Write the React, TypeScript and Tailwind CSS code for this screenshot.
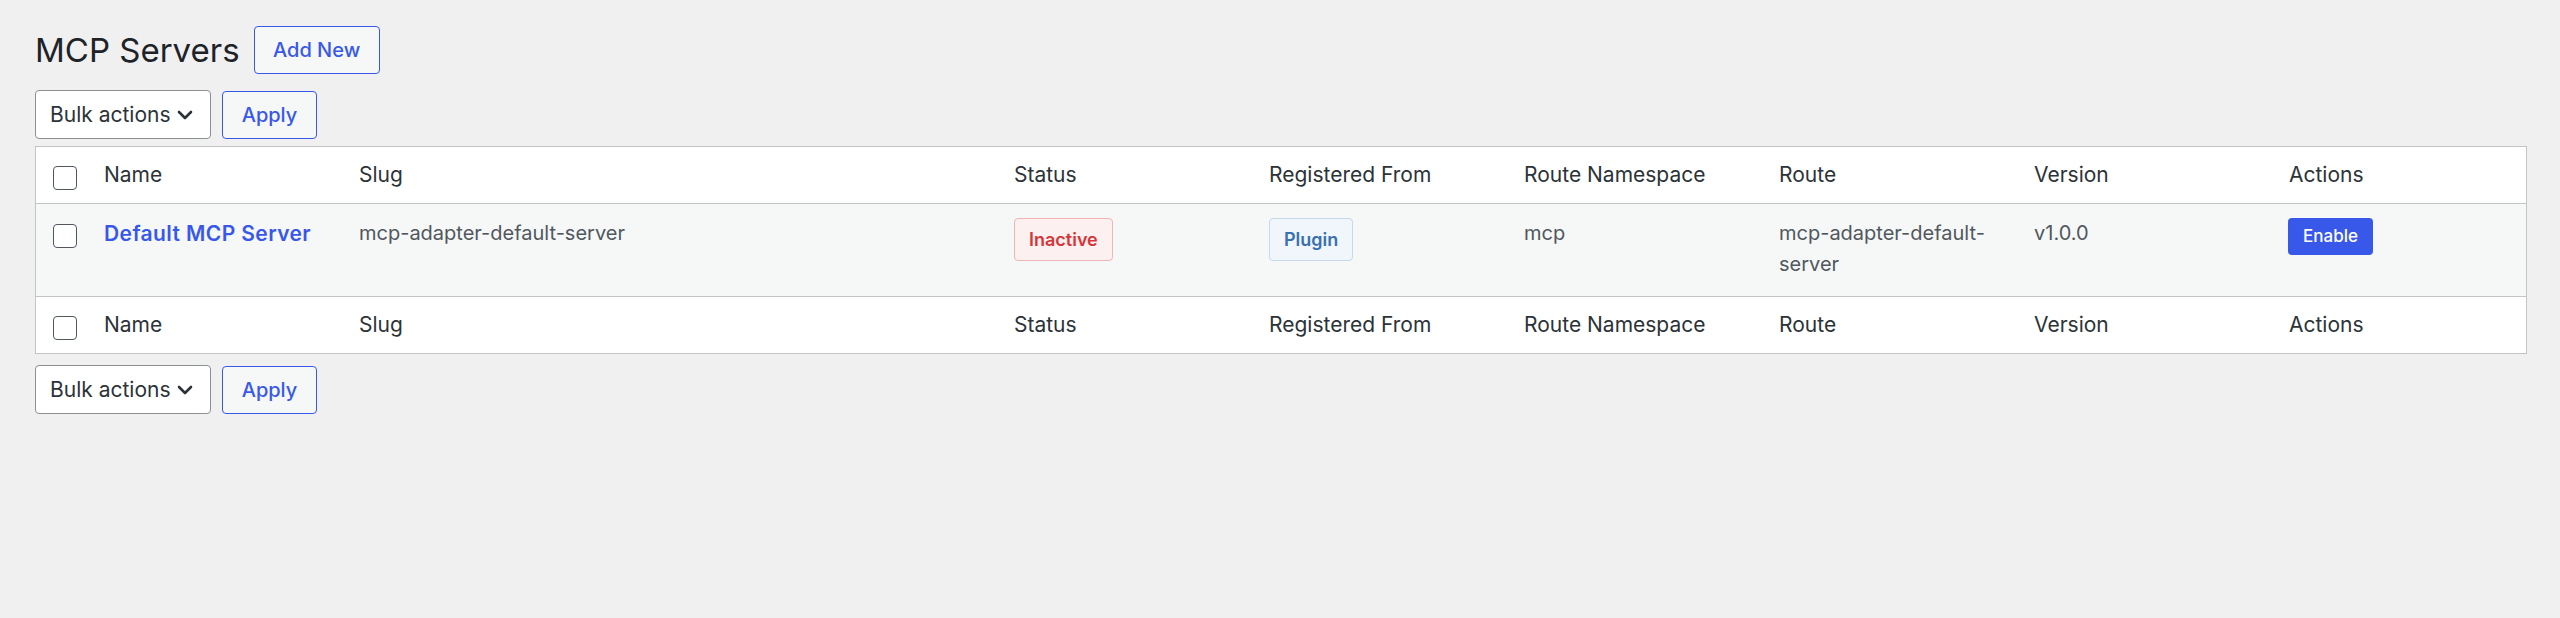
import React from "react";

const cols =
  "grid grid-cols-[53px_255px_655px_255px_255px_255px_255px_255px_1fr]";

const headings = [
  "Name",
  "Slug",
  "Status",
  "Registered From",
  "Route Namespace",
  "Route",
  "Version",
  "Actions",
];

function Checkbox() {
  return (
    <span className="block h-[24px] w-[24px] rounded-[4px] border-[1.5px] border-[#50575e] bg-white" />
  );
}

function BulkBar() {
  return (
    <div className="flex items-center gap-[11px]">
      <div className="flex h-[49px] w-[176px] items-center justify-between rounded-[4px] border border-[#8c8f94] bg-white pl-[14px] pr-[17px] text-[21px] text-[#2c3338]">
        <span>Bulk actions</span>
        <svg width="16" height="10" viewBox="0 0 16 10" fill="none">
          <polyline
            points="2,2 8,8 14,2"
            stroke="#2c3338"
            strokeWidth="2.6"
            strokeLinecap="round"
            strokeLinejoin="round"
          />
        </svg>
      </div>
      <button className="flex h-[48px] w-[95px] items-center justify-center rounded-[4px] border border-[#3858e9] bg-[#f6f7f7] text-[20px] font-medium text-[#3858e9]">
        Apply
      </button>
    </div>
  );
}

function HeadRow({ top }: { top?: boolean }) {
  return (
    <div
      className={`${cols} h-[57px] items-center bg-white text-[21px] text-[#2c3338] ${
        top ? "border-b border-[#c3c4c7]" : "border-t border-[#c3c4c7]"
      }`}
    >
      <div className="pl-[17px] pt-[5px]">
        <Checkbox />
      </div>
      {headings.map((h) => (
        <div key={h} className="pl-[15px]">
          {h}
        </div>
      ))}
    </div>
  );
}

export default function App() {
  return (
    <div
      className="min-h-[618px] w-full bg-[#f0f0f1] pl-[35px] pr-[33px] pt-[26px]"
      style={{ fontFamily: "Inter, 'Noto Sans', sans-serif" }}
    >
      <div className="flex items-center gap-[14px]">
        <h1 className="text-[33px] leading-none text-[#1d2327]">
          MCP Servers
        </h1>
        <button className="flex h-[48px] w-[126px] items-center justify-center rounded-[4px] border border-[#3858e9] bg-[#f6f7f7] text-[20px] font-medium text-[#3858e9]">
          Add New
        </button>
      </div>

      <div className="mt-[16px]">
        <BulkBar />
      </div>

      <div className="mt-[7px] border border-[#c3c4c7] bg-white">
        <HeadRow top />

        <div
          className={`${cols} bg-[#f6f7f7] pb-[16px] pt-[14px] text-[20px] leading-[31px] text-[#50575e]`}
        >
          <div className="pl-[17px] pt-[6px]">
            <Checkbox />
          </div>
          <div className="pl-[15px] text-[21px] font-semibold tracking-[0.4px] text-[#3858e9]">
            Default MCP Server
          </div>
          <div className="pl-[15px]">mcp-adapter-default-server</div>
          <div className="pl-[15px]">
            <span className="inline-block rounded-[4px] border border-[#f3b4b5] bg-[#fcf0f1] px-[14px] py-[7px] text-[18px] font-semibold leading-[27px] text-[#d63638]">
              Inactive
            </span>
          </div>
          <div className="pl-[15px]">
            <span className="inline-block rounded-[4px] border border-[#c5d9ed] bg-[#f0f6fc] px-[14px] py-[7px] text-[18px] font-semibold leading-[27px] text-[#3a6fb0]">
              Plugin
            </span>
          </div>
          <div className="pl-[15px]">mcp</div>
          <div className="pl-[15px] pr-[15px]">mcp-adapter-default-server</div>
          <div className="pl-[15px]">v1.0.0</div>
          <div className="pl-[14px]">
            <button className="h-[37px] w-[85px] rounded-[4px] bg-[#3858e9] text-[17px] font-medium leading-none text-white">
              Enable
            </button>
          </div>
        </div>

        <HeadRow />
      </div>

      <div className="mt-[11px]">
        <BulkBar />
      </div>
    </div>
  );
}
